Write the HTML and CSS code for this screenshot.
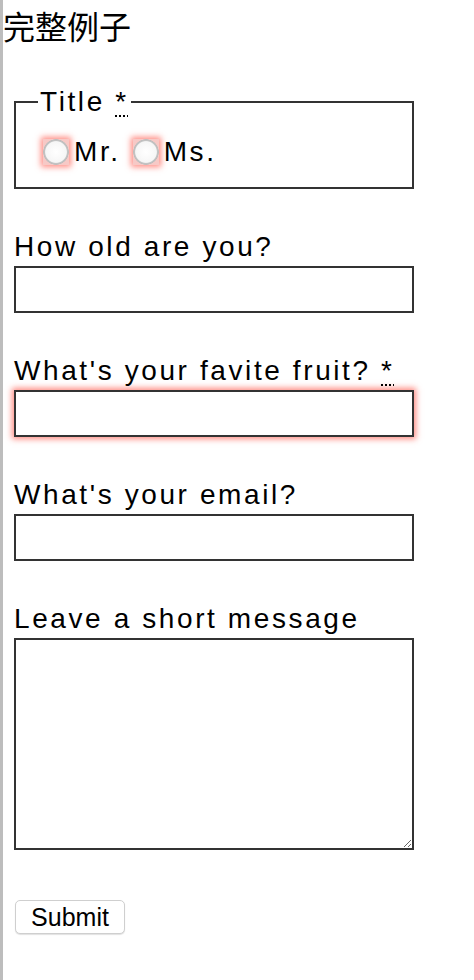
FILE: index.html
```html
<!DOCTYPE html>
<html lang="zh">
<head>
<meta charset="utf-8">
<title>完整例子</title>
<link rel="stylesheet" href="styles.css">
</head>
<body>
<h1 class="page-title">完整例子</h1>
<form class="form">
  <fieldset class="title-set">
    <legend class="legend">Title <abbr class="req" title="required">*</abbr></legend>
    <div class="radio-row">
      <input class="radio invalid" type="radio" name="title" id="mr" value="mr">
      <label class="radio-label" for="mr">Mr.</label>
      <input class="radio invalid" type="radio" name="title" id="ms" value="ms">
      <label class="radio-label" for="ms">Ms.</label>
    </div>
  </fieldset>
  <div class="field">
    <label class="field-label" for="age">How old are you?</label>
    <input class="text-input" type="text" id="age" name="age">
  </div>
  <div class="field">
    <label class="field-label" for="fruit">What's your favite fruit? <abbr class="req" title="required">*</abbr></label>
    <input class="text-input invalid" type="text" id="fruit" name="fruit">
  </div>
  <div class="field">
    <label class="field-label" for="email">What's your email?</label>
    <input class="text-input" type="email" id="email" name="email">
  </div>
  <div class="field">
    <label class="field-label" for="msg">Leave a short message</label>
    <textarea class="text-input textarea" id="msg" name="msg"></textarea>
  </div>
  <div class="actions">
    <button class="submit" type="submit">Submit</button>
  </div>
</form>
</body>
</html>
```
FILE: styles.css
```css
html, body {
  margin: 0;
  padding: 0;
}

body {
  min-height: 100vh;
  box-sizing: border-box;
  border-left: 3px solid #bdbdbd;
  background: #fff;
  color: #000;
  font-family: "Liberation Sans", Arial, sans-serif;
}

.page-title {
  margin: 2px 0 0;
  font-family: "Noto Sans CJK SC", sans-serif;
  font-size: 32px;
  font-weight: 400;
  line-height: 46px;
}

.form {
  margin: 38px 0 0;
  padding: 0 0 0 11px;
}

.title-set {
  width: 400px;
  box-sizing: border-box;
  margin: 0;
  border: 2px solid #333;
  padding: 18px 22px 20px;
}

.legend {
  padding: 0 2px;
  font-size: 28px;
  letter-spacing: 2.6px;
  line-height: normal;
}

.req {
  text-decoration: underline dotted;
  text-decoration-thickness: 2px;
  text-underline-offset: 4px;
  cursor: help;
}

.radio-row {
  display: flex;
  align-items: center;
  height: 31px;
}

.radio {
  appearance: none;
  -webkit-appearance: none;
  width: 26px;
  height: 26px;
  margin: 0 5px 0 5px;
  border: 0;
  border-radius: 0;
  background: radial-gradient(circle closest-side, #ffffff 0, #f6f6f6 80%, #c4c4c4 87%, #bdbdbd 96%, #f7c9c6 100%);
}

.radio-label + .radio {
  margin-left: 12px;
}

.radio-label {
  font-size: 28px;
  letter-spacing: 2.6px;
  line-height: 31px;
}

.field {
  margin-top: 40px;
}

.field-label {
  display: block;
  margin-bottom: 1px;
  font-size: 28px;
  letter-spacing: 2.6px;
  line-height: 36px;
}

.text-input {
  display: block;
  width: 400px;
  height: 47px;
  box-sizing: border-box;
  margin: 0;
  padding: 0 6px;
  border: 2px solid #333;
  border-radius: 0;
  background: #fff;
  font-family: "Liberation Sans", Arial, sans-serif;
  font-size: 20px;
  outline: none;
}

.textarea {
  height: 212px;
  padding: 6px;
}

.invalid {
  box-shadow: 0 0 6px 2px rgba(255, 60, 45, 0.6);
}

.actions {
  margin-top: 50px;
  padding-left: 1px;
}

.submit {
  width: 110px;
  height: 34px;
  box-sizing: border-box;
  margin: 0;
  padding: 0;
  border: 1px solid #cfcfcf;
  border-radius: 5px;
  background: #fff;
  box-shadow: 0 1px 1px rgba(0, 0, 0, 0.12);
  color: #000;
  font-family: "Liberation Sans", Arial, sans-serif;
  font-size: 25px;
  line-height: 32px;
}
```
